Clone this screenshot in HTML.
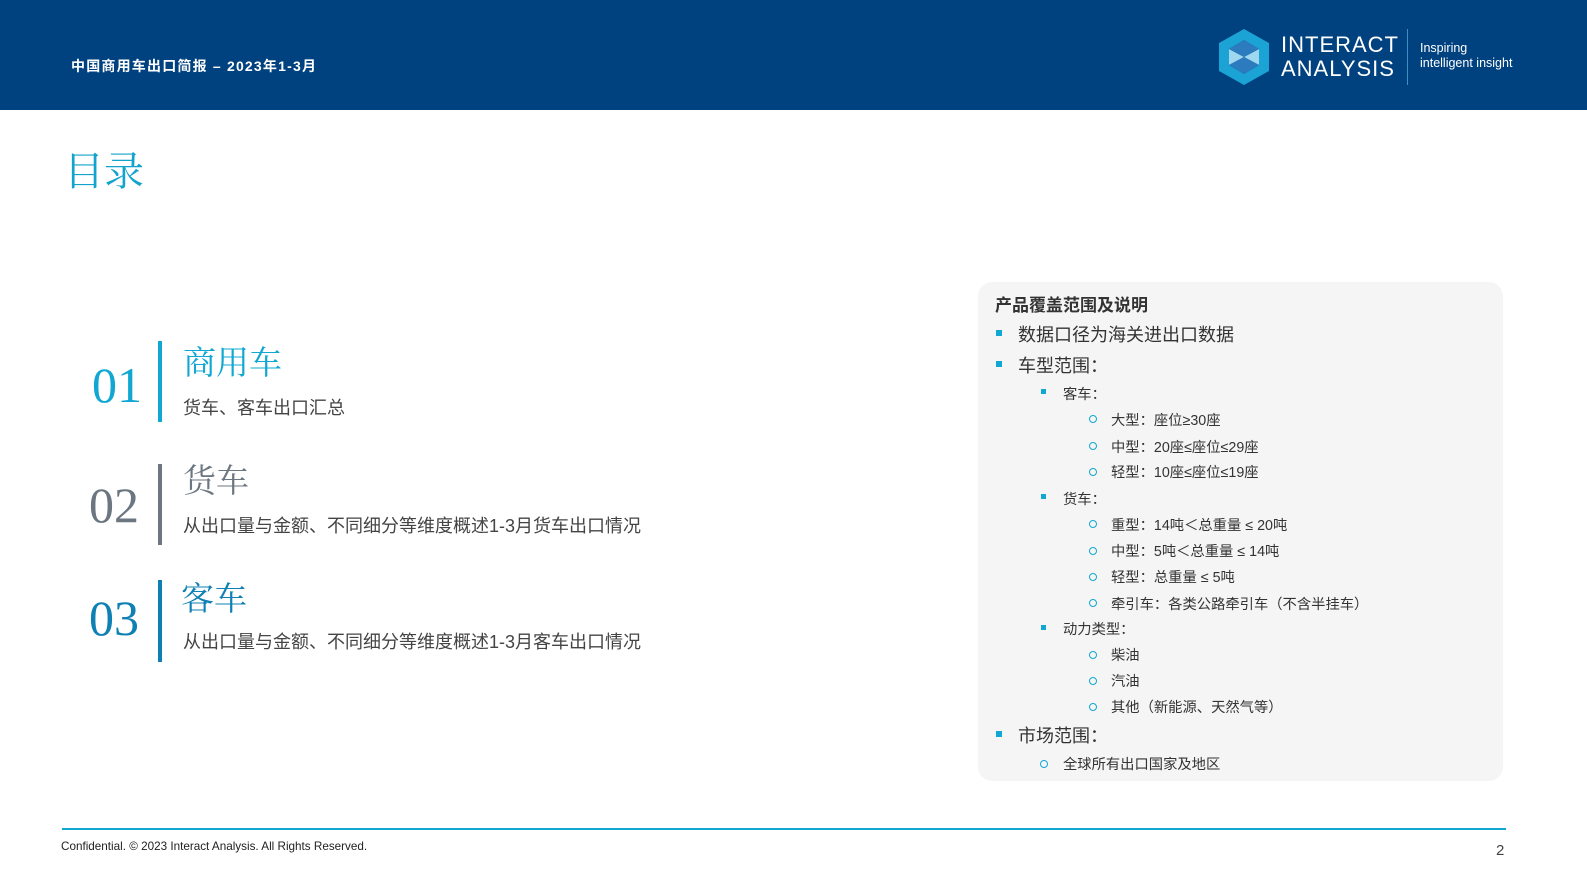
<!DOCTYPE html>
<html><head><meta charset="utf-8"><style>
*{margin:0;padding:0;box-sizing:border-box}
body{width:1587px;height:892px;position:relative;background:#fff;font-family:"Liberation Sans","Noto Sans CJK SC",sans-serif;overflow:hidden;color:#333}
.a{position:absolute;white-space:nowrap}
.hdr{position:absolute;left:0;top:0;width:1587px;height:110px;background:#00417f}
.serif{font-family:"Liberation Serif","Noto Serif CJK SC",serif}
.bar{position:absolute;width:4px}
.panel{position:absolute;left:978px;top:282px;width:525px;height:499px;background:#f5f5f5;border-radius:14px}
.sq{position:absolute;width:6px;height:6px;background:#10a8d2}
.ci{position:absolute;width:8px;height:8px;border:1.5px solid #10a8d2;border-radius:50%}
.l1{font-size:18px;color:#333}
.l2{font-size:14.3px;color:#333}
</style></head><body>
<div class="hdr"></div>
<div class="a" style="left:71px;top:56px;font-size:14px;font-weight:bold;color:#fff;letter-spacing:1.2px">中国商用车出口简报 – 2023年1-3月</div>
<svg class="a" style="left:1218px;top:28px" width="52" height="58" viewBox="0 0 52 58">
<polygon points="26,1 51,15 51,43 26,57 1,43 1,15" fill="#1aa3d4"/>
<polygon points="26,12 41,21 41,37 26,46 11,37 11,21" fill="#00417f"/>
<polygon points="11,21 26,29 11,37" fill="#9fd8ee"/>
<polygon points="41,21 26,29 41,37" fill="#9fd8ee"/>
<polygon points="26,12 41,21 26,29 11,21" fill="#2c7bbf"/>
<polygon points="26,29 41,37 26,46 11,37" fill="#2c7bbf"/>
</svg>
<div class="a" style="left:1281px;top:33px;font-size:22px;color:#fff;letter-spacing:1px;line-height:24px">INTERACT<br>ANALYSIS</div>
<div class="a" style="left:1407px;top:29px;width:1px;height:56px;background:#3d8fc7"></div>
<div class="a" style="left:1420px;top:41px;font-size:12.5px;color:#fff;line-height:15px">Inspiring<br>intelligent insight</div>

<div class="a serif" style="left:64px;top:140px;font-size:40px;color:#14a3cc">目录</div>

<div class="a serif" style="left:92px;top:356px;font-size:50px;color:#10a8d2">01</div>
<div class="bar" style="left:158px;top:341px;height:81px;background:#10a8d2"></div>
<div class="a serif" style="left:183px;top:337px;font-size:33px;color:#10a8d2">商用车</div>
<div class="a" style="left:183px;top:394px;font-size:18px;color:#444">货车、客车出口汇总</div>

<div class="a serif" style="left:89px;top:476px;font-size:50px;color:#6c7680">02</div>
<div class="bar" style="left:158px;top:464px;height:81px;background:#6c7680"></div>
<div class="a serif" style="left:183px;top:455px;font-size:33px;color:#6c7680">货车</div>
<div class="a" style="left:183px;top:512px;font-size:18px;color:#444">从出口量与金额、不同细分等维度概述1-3月货车出口情况</div>

<div class="a serif" style="left:89px;top:589px;font-size:50px;color:#0f80b3">03</div>
<div class="bar" style="left:158px;top:580px;height:82px;background:#0f80b3"></div>
<div class="a serif" style="left:181px;top:573px;font-size:33px;color:#0f80b3">客车</div>
<div class="a" style="left:183px;top:628px;font-size:18px;color:#444">从出口量与金额、不同细分等维度概述1-3月客车出口情况</div>

<div class="panel"></div>
<div class="a" style="left:995px;top:291px;font-size:17px;font-weight:bold;color:#333">产品覆盖范围及说明</div>
<div class="sq" style="left:996px;top:330px"></div><div class="a l1" style="left:1018px;top:321px">数据口径为海关进出口数据</div>
<div class="sq" style="left:996px;top:361px"></div><div class="a l1" style="left:1018px;top:352px">车型范围：</div>
<div class="sq" style="left:1041px;top:389px;width:5px;height:5px"></div><div class="a l2" style="left:1063px;top:383px">客车：</div>
<div class="ci" style="left:1089px;top:415px"></div><div class="a l2" style="left:1111px;top:409px">大型：座位≥30座</div>
<div class="ci" style="left:1089px;top:442px"></div><div class="a l2" style="left:1111px;top:436px">中型：20座≤座位≤29座</div>
<div class="ci" style="left:1089px;top:468px"></div><div class="a l2" style="left:1111px;top:461px">轻型：10座≤座位≤19座</div>
<div class="sq" style="left:1041px;top:494px;width:5px;height:5px"></div><div class="a l2" style="left:1063px;top:488px">货车：</div>
<div class="ci" style="left:1089px;top:520px"></div><div class="a l2" style="left:1111px;top:514px">重型：14吨＜总重量 ≤ 20吨</div>
<div class="ci" style="left:1089px;top:547px"></div><div class="a l2" style="left:1111px;top:540px">中型：5吨＜总重量 ≤ 14吨</div>
<div class="ci" style="left:1089px;top:573px"></div><div class="a l2" style="left:1111px;top:566px">轻型：总重量 ≤ 5吨</div>
<div class="ci" style="left:1089px;top:599px"></div><div class="a l2" style="left:1111px;top:593px">牵引车：各类公路牵引车（不含半挂车）</div>
<div class="sq" style="left:1041px;top:625px;width:5px;height:5px"></div><div class="a l2" style="left:1063px;top:618px">动力类型：</div>
<div class="ci" style="left:1089px;top:651px"></div><div class="a l2" style="left:1111px;top:644px">柴油</div>
<div class="ci" style="left:1089px;top:677px"></div><div class="a l2" style="left:1111px;top:670px">汽油</div>
<div class="ci" style="left:1089px;top:703px"></div><div class="a l2" style="left:1111px;top:696px">其他（新能源、天然气等）</div>
<div class="sq" style="left:996px;top:731px"></div><div class="a l1" style="left:1018px;top:722px">市场范围：</div>
<div class="ci" style="left:1040px;top:760px"></div><div class="a l2" style="left:1063px;top:753px">全球所有出口国家及地区</div>

<div class="a" style="left:62px;top:828px;width:1444px;height:2px;background:#10a8d2"></div>
<div class="a" style="left:61px;top:840px;font-size:11.7px;color:#222">Confidential. © 2023 Interact Analysis. All Rights Reserved.</div>
<div class="a" style="left:1496px;top:842px;font-size:15px;color:#444">2</div>
</body></html>
